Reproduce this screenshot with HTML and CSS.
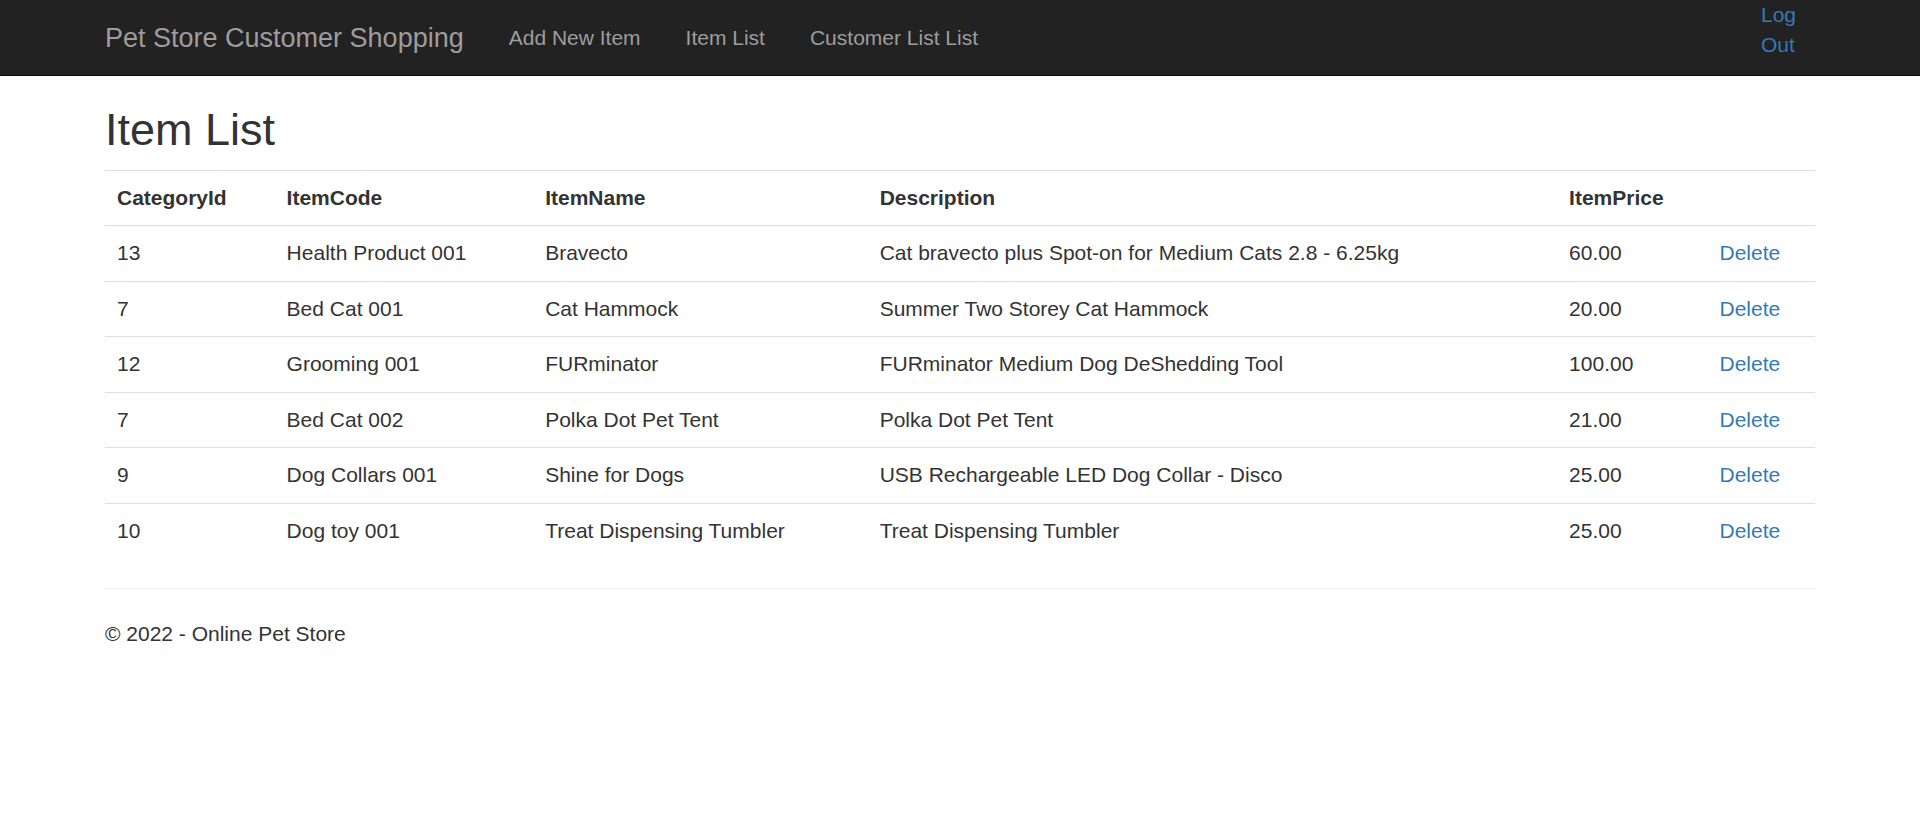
FILE: index.html
```html
<!DOCTYPE html>
<html lang="en">
<head>
<meta charset="utf-8">
<title>Item List - Pet Store</title>
<link rel="stylesheet" href="styles.css">
</head>
<body>
<header class="navbar">
  <div class="navbar-inner">
    <a class="brand" href="#">Pet Store Customer Shopping</a>
    <ul class="nav">
      <li><a href="#">Add New Item</a></li>
      <li><a href="#">Item List</a></li>
      <li><a href="#">Customer List List</a></li>
    </ul>
    <a class="logout" href="#">Log Out</a>
  </div>
</header>
<main class="body-content">
  <h2 class="page-title">Item List</h2>
  <table class="table">
    <tr>
      <th>CategoryId</th>
      <th>ItemCode</th>
      <th>ItemName</th>
      <th>Description</th>
      <th>ItemPrice</th>
      <th></th>
    </tr>
    <tr>
      <td>13</td>
      <td>Health Product 001</td>
      <td>Bravecto</td>
      <td>Cat bravecto plus Spot-on for Medium Cats 2.8 - 6.25kg</td>
      <td>60.00</td>
      <td><a href="#">Delete</a></td>
    </tr>
    <tr>
      <td>7</td>
      <td>Bed Cat 001</td>
      <td>Cat Hammock</td>
      <td>Summer Two Storey Cat Hammock</td>
      <td>20.00</td>
      <td><a href="#">Delete</a></td>
    </tr>
    <tr>
      <td>12</td>
      <td>Grooming 001</td>
      <td>FURminator</td>
      <td>FURminator Medium Dog DeShedding Tool</td>
      <td>100.00</td>
      <td><a href="#">Delete</a></td>
    </tr>
    <tr>
      <td>7</td>
      <td>Bed Cat 002</td>
      <td>Polka Dot Pet Tent</td>
      <td>Polka Dot Pet Tent</td>
      <td>21.00</td>
      <td><a href="#">Delete</a></td>
    </tr>
    <tr>
      <td>9</td>
      <td>Dog Collars 001</td>
      <td>Shine for Dogs</td>
      <td>USB Rechargeable LED Dog Collar - Disco</td>
      <td>25.00</td>
      <td><a href="#">Delete</a></td>
    </tr>
    <tr>
      <td>10</td>
      <td>Dog toy 001</td>
      <td>Treat Dispensing Tumbler</td>
      <td>Treat Dispensing Tumbler</td>
      <td>25.00</td>
      <td><a href="#">Delete</a></td>
    </tr>
  </table>
  <hr class="rule">
  <footer class="footer">
    <p>&copy; 2022 - Online Pet Store</p>
  </footer>
</main>
</body>
</html>
```

FILE: styles.css
```css
* {
  box-sizing: border-box;
}

html, body {
  margin: 0;
  padding: 0;
}

body {
  font-family: "Liberation Sans", Arial, Helvetica, sans-serif;
  font-size: 21px;
  line-height: 30px;
  color: #333333;
  background: #ffffff;
}

a {
  color: #337ab7;
  text-decoration: none;
}

/* Navbar */
.navbar {
  background: #222222;
  border-bottom: 1px solid #080808;
  min-height: 76px;
}

.navbar-inner {
  width: 1710px;
  margin: 0 auto;
  display: flex;
  align-items: flex-start;
}

.brand {
  display: block;
  font-size: 27px;
  line-height: 30px;
  padding: 22.5px 22.5px 22.5px 0;
  color: #9d9d9d;
}

.nav {
  display: flex;
  list-style: none;
  margin: 0;
  padding: 0;
}

.nav a {
  display: block;
  padding: 22.5px;
  line-height: 30px;
  color: #9d9d9d;
}

.logout {
  margin-left: auto;
  width: 54px;
  line-height: 30px;
  color: #337ab7;
}

/* Content */
.body-content {
  width: 1710px;
  margin: 0 auto;
}

.page-title {
  font-size: 45px;
  font-weight: 500;
  line-height: 1.1;
  margin: 29px 0 15px;
  color: #333333;
}

.table {
  width: 100%;
  border-collapse: collapse;
  border-spacing: 0;
}

.table th,
.table td {
  padding: 12px 12px 12.5px;
  line-height: 30px;
  text-align: left;
  vertical-align: top;
  border-top: 1px solid #dddddd;
}

.table th {
  font-weight: bold;
}

.rule {
  margin: 30px 0;
  border: 0;
  border-top: 1px solid #eeeeee;
  height: 0;
}

.footer p {
  margin: 0 0 15px;
}
```
